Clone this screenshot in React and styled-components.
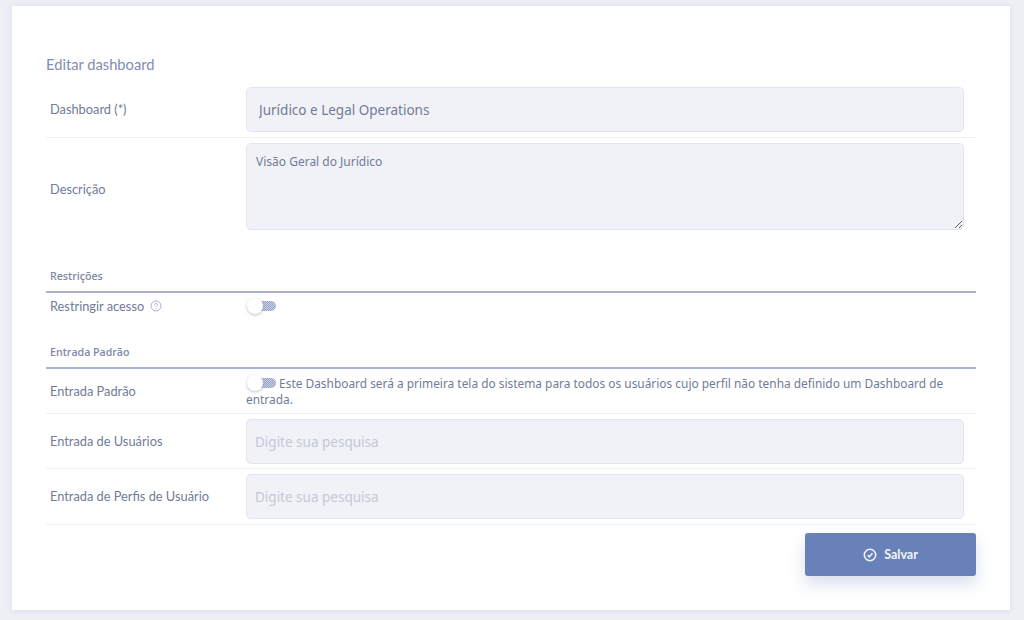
import React from 'react'
import styled, { createGlobalStyle } from 'styled-components'

const GlobalStyle = createGlobalStyle`
  html, body { margin: 0; padding: 0; height: 100%; }
  body {
    background: #eef0f6;
    font-family: "Open Sans", "Liberation Sans", sans-serif;
    color: #6b7594;
    overflow: hidden;
  }
  * { box-sizing: border-box; }
`

const Page = styled.div`
  width: 1024px;
  height: 620px;
  padding: 6px 14px 10px 12px;
`

const Card = styled.main`
  width: 998px;
  height: 604px;
  background: #fff;
  box-shadow: 0 1px 6px rgba(150, 160, 195, 0.25);
  padding: 50px 34px 0;
`

const Title = styled.h1`
  margin: 0;
  height: 26px;
  font-family: "Lato", sans-serif;
  font-size: 14.7px;
  font-weight: 400;
  line-height: 16px;
  color: #7f8db2;
`

const Row = styled.div`
  display: grid;
  grid-template-columns: 200px 1fr;
  align-items: center;
  height: ${p => p.$height || 56}px;
  padding: ${p => (p.$tight ? '0 12px 0 0' : '5px 12px 5px 0')};
  border-bottom: ${p => (p.$plain ? 'none' : '1px solid #eef0f4')};
`

const Label = styled.label`
  padding-left: 4px;
  padding-top: ${p => p.$drop || 0}px;
  padding-bottom: 1px;
  font-family: "Lato", sans-serif;
  font-size: 12.8px;
  line-height: 18px;
  color: #717b97;
  display: flex;
  align-items: center;
  gap: 6px;
`

const Input = styled.input`
  display: block;
  width: 100%;
  height: 45px;
  padding: 0 ${p => (p.$filled ? 12 : 8)}px;
  background: #f1f2f7;
  border: 1px solid #e3e5ee;
  border-radius: 5px;
  outline: none;
  font-family: "Noto Sans", sans-serif;
  font-size: 13.5px;
  color: #717b97;
  &::placeholder { color: #c3c8d9; opacity: 1; }
`

const TextArea = styled.textarea`
  display: block;
  width: 100%;
  height: 87px;
  padding: 9px;
  background: #f1f2f7;
  border: 1px solid #e3e5ee;
  border-radius: 5px;
  outline: none;
  resize: vertical;
  font-family: "Noto Sans", sans-serif;
  font-size: 12px;
  line-height: 18px;
  color: #717b97;
`

const Section = styled.h2`
  margin: ${p => p.$top}px 0 0;
  height: 25px;
  padding: 0 0 0 4px;
  border-bottom: 2px solid #a9b3cf;
  font-family: "Open Sans", sans-serif;
  font-size: 10.6px;
  font-weight: 600;
  line-height: 16px;
  color: #7f89a8;
`

const Toggle = styled.span`
  position: relative;
  display: inline-block;
  width: 30px;
  height: 16px;
  flex: none;
  vertical-align: top;
  &::before {
    content: "";
    position: absolute;
    left: 8px;
    right: 0;
    top: 3px;
    height: 10px;
    border-radius: 0 5px 5px 0;
    background: repeating-conic-gradient(#94a1c6 0 25%, #ccd2e4 0 50%) 0 0 / 2px 2px;
  }
  &::after {
    content: "";
    position: absolute;
    left: 1px;
    top: 0;
    width: 16px;
    height: 16px;
    border-radius: 50%;
    background: #fff;
    box-shadow: 0 1px 3px rgba(120, 130, 175, 0.5);
  }
`

const ToggleCell = styled.div`
  display: flex;
  align-items: center;
`

const ToggleText = styled.div`
  font-family: "Noto Sans", sans-serif;
  font-size: 11.9px;
  line-height: 16px;
  color: #717b97;
`

const Footer = styled.div`
  display: flex;
  justify-content: flex-end;
  padding-top: 8px;
`

const SaveButton = styled.button`
  width: 171px;
  height: 43px;
  display: flex;
  align-items: center;
  justify-content: center;
  gap: 7px;
  background: #6881b9;
  border: none;
  border-radius: 3px;
  box-shadow: 0 8px 16px rgba(104, 129, 185, 0.25);
  font-family: "Lato", sans-serif;
  font-size: 12.5px;
  font-weight: 700;
  color: #f2f4fa;
`

function HelpIcon() {
  return (
    <svg width="12" height="12" viewBox="0 0 12 12" fill="none" stroke="#a9b3cf" strokeWidth="1">
      <circle cx="6" cy="6" r="5" />
      <path d="M4.6 4.8a1.4 1.4 0 1 1 2 1.3c-.4.2-.6.5-.6 1" />
      <path d="M6 8.4v.6" />
    </svg>
  )
}

function CheckIcon() {
  return (
    <svg width="14" height="14" viewBox="0 0 14 14" fill="none" stroke="#f2f4fa" strokeWidth="1.6">
      <circle cx="7" cy="7" r="5.7" />
      <path d="M4.6 7.2l1.7 1.7 3.2-3.6" />
    </svg>
  )
}

export default function App() {
  return (
    <Page>
      <GlobalStyle />
      <Card>
        <Title>Editar dashboard</Title>
        <Row>
          <Label>Dashboard (*)</Label>
          <Input $filled defaultValue="Jurídico e Legal Operations" />
        </Row>
        <Row $plain $height={97}>
          <Label $drop={6}>Descrição</Label>
          <TextArea defaultValue="Visão Geral do Jurídico" />
        </Row>

        <Section $top={33}>Restrições</Section>
        <Row $plain $tight $height={26}>
          <Label>Restringir acesso <HelpIcon /></Label>
          <ToggleCell><Toggle /></ToggleCell>
        </Row>

        <Section $top={25}>Entrada Padrão</Section>
        <Row $height={45}>
          <Label>Entrada Padrão</Label>
          <ToggleText>
            <Toggle /> Este Dashboard será a primeira tela do sistema para todos os usuários cujo perfil não tenha definido um Dashboard de entrada.
          </ToggleText>
        </Row>
        <Row $height={55}>
          <Label>Entrada de Usuários</Label>
          <Input placeholder="Digite sua pesquisa" />
        </Row>
        <Row>
          <Label>Entrada de Perfis de Usuário</Label>
          <Input placeholder="Digite sua pesquisa" />
        </Row>

        <Footer>
          <SaveButton><CheckIcon /> Salvar</SaveButton>
        </Footer>
      </Card>
    </Page>
  )
}
